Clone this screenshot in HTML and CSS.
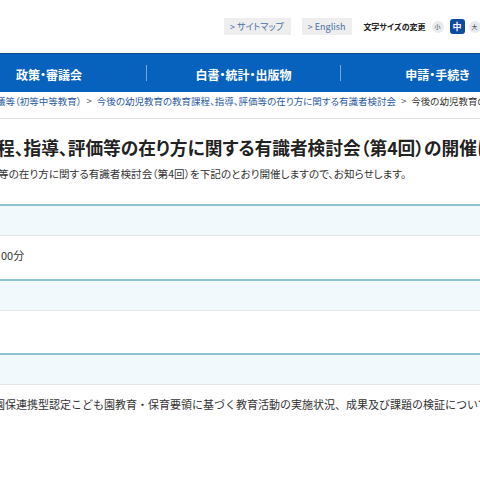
FILE: index.html
```html
<!DOCTYPE html>
<html lang="ja">
<head>
    <meta charset="UTF-8">
    <meta name="viewport" content="width=device-width, initial-scale=1.0">
    <title>今後の幼児教育の教育課程、指導、評価等の在り方に関する有識者検討会（第4回）の開催について</title>
    <link rel="stylesheet" href="styles.css">
</head>
<body>
    <header class="site-header">
        <div class="util">
            <a class="util-btn" href="#">&gt; サイトマップ</a>
            <a class="util-btn" href="#">&gt; English</a>
            <span class="size-label">文字サイズの変更</span>
            <span class="size-btn">小</span>
            <span class="size-btn current">中</span>
            <span class="size-btn">大</span>
        </div>

        <nav class="gnav">
            <ul>
                <li><a href="#">政策・審議会</a></li>
                <li><a href="#">白書・統計・出版物</a></li>
                <li><a href="#">申請・手続き</a></li>
            </ul>
        </nav>
    </header>

    <div class="main">
        <p class="crumbs">
            <a href="#">議等（初等中等教育）</a><span class="sep">&gt;</span><a href="#">今後の幼児教育の教育課程、指導、評価等の在り方に関する有識者検討会</a><span class="sep">&gt;</span>今後の幼児教育の教育課程、指導、評価等の在り方に関する有識者検討会（第4回）の開催について
        </p>

        <h1 class="page-title">程、指導、評価等の在り方に関する有識者検討会（第4回）の開催について</h1>

        <p class="lead">等の在り方に関する有識者検討会（第4回）を下記のとおり開催しますので、お知らせします。</p>

        <table class="info">
            <tr class="head"><td>&nbsp;</td></tr>
            <tr class="body"><td class="t-date">00分</td></tr>
            <tr class="head"><td>&nbsp;</td></tr>
            <tr class="body"><td>&nbsp;</td></tr>
            <tr class="head"><td>&nbsp;</td></tr>
            <tr class="body"><td class="t-agenda">園保連携型認定こども園教育・保育要領に基づく教育活動の実施状況、成果及び課題の検証について</td></tr>
        </table>
    </div>
</body>
</html>
```

FILE: styles.css
```css
body {
    margin: 0;
    font-family: "Noto Sans CJK JP", "Noto Sans", sans-serif;
    font-feature-settings: "palt";
    color: #333;
    background: #fff;
    overflow: hidden;
}

a {
    text-decoration: none;
}

/* header */
.site-header {
    width: 480px;
}

.util {
    display: flex;
    align-items: center;
    height: 53px;
    padding: 0 0 0 224px;
    box-sizing: border-box;
    white-space: nowrap;
}

.util-btn {
    display: inline-block;
    height: 17px;
    line-height: 17px;
    padding: 0 7px 0 6px;
    margin-right: 11px;
    background-color: #eeeeee;
    color: #4a6fa5;
    font-size: 9px;
}

.size-label {
    font-size: 8px;
    font-weight: bold;
    color: #222;
    margin-right: 6px;
}

.size-btn {
    display: inline-block;
    flex: none;
    width: 12px;
    height: 12px;
    line-height: 12px;
    border-radius: 50%;
    background-color: #e8ecef;
    color: #333;
    font-size: 6px;
    text-align: center;
    margin-right: 6px;
}

.size-btn.current {
    width: 15px;
    height: 15px;
    line-height: 15px;
    border-radius: 3px;
    background-color: #0d4d9e;
    color: #fff;
    font-size: 9px;
    font-weight: bold;
    margin-right: 4px;
}

.gnav {
    height: 39px;
    background-color: #0762bd;
    border-top: 1px solid #0a4c93;
    box-sizing: border-box;
    overflow: hidden;
}

.gnav ul {
    display: flex;
    align-items: center;
    height: 100%;
    margin: 0 0 0 -48px;
    padding: 0;
    list-style: none;
}

.gnav li {
    flex: none;
    width: 194px;
    height: 16px;
    line-height: 16px;
    text-align: center;
    border-left: 1px solid rgba(255, 255, 255, 0.45);
    box-sizing: border-box;
}

.gnav li:first-child {
    border-left: none;
}

.gnav a {
    color: #fff;
    font-size: 12px;
    font-weight: bold;
}

/* content */
.main {
    width: 480px;
    overflow: hidden;
}

.crumbs {
    margin: 0;
    padding: 2px 0 10px;
    line-height: 14px;
    font-size: 9.5px;
    color: #333;
    white-space: nowrap;
    text-indent: -4px;
    border-bottom: 1px solid #dedede;
}

.crumbs a {
    color: #2b5aa0;
}

.crumbs .sep {
    margin: 0 5px;
    color: #555;
}

.page-title {
    margin: 16px 0 0;
    line-height: 24px;
    font-size: 17.7px;
    font-weight: bold;
    color: #222;
    white-space: nowrap;
    text-indent: -3px;
}

.lead {
    margin: 8px 0 0;
    line-height: 14px;
    font-size: 10.6px;
    color: #333;
    white-space: nowrap;
    text-indent: -2px;
}

.info {
    width: 100%;
    margin-top: 23px;
    border-collapse: collapse;
}

.info td {
    padding: 0;
    font-size: 11px;
    font-feature-settings: normal;
    line-height: 14px;
    color: #333;
    white-space: nowrap;
}

.info .head td {
    height: 29px;
    background-color: #f2f9fc;
    border-top: 2px solid #8cc3d3;
    border-bottom: 1px solid #e2e6e8;
}

.info .body td {
    height: 44px;
    padding-top: 12px;
    box-sizing: border-box;
    vertical-align: top;
}

.info .t-date {
    padding-left: 1px;
}

.info .t-agenda {
    text-indent: -6px;
}
```
